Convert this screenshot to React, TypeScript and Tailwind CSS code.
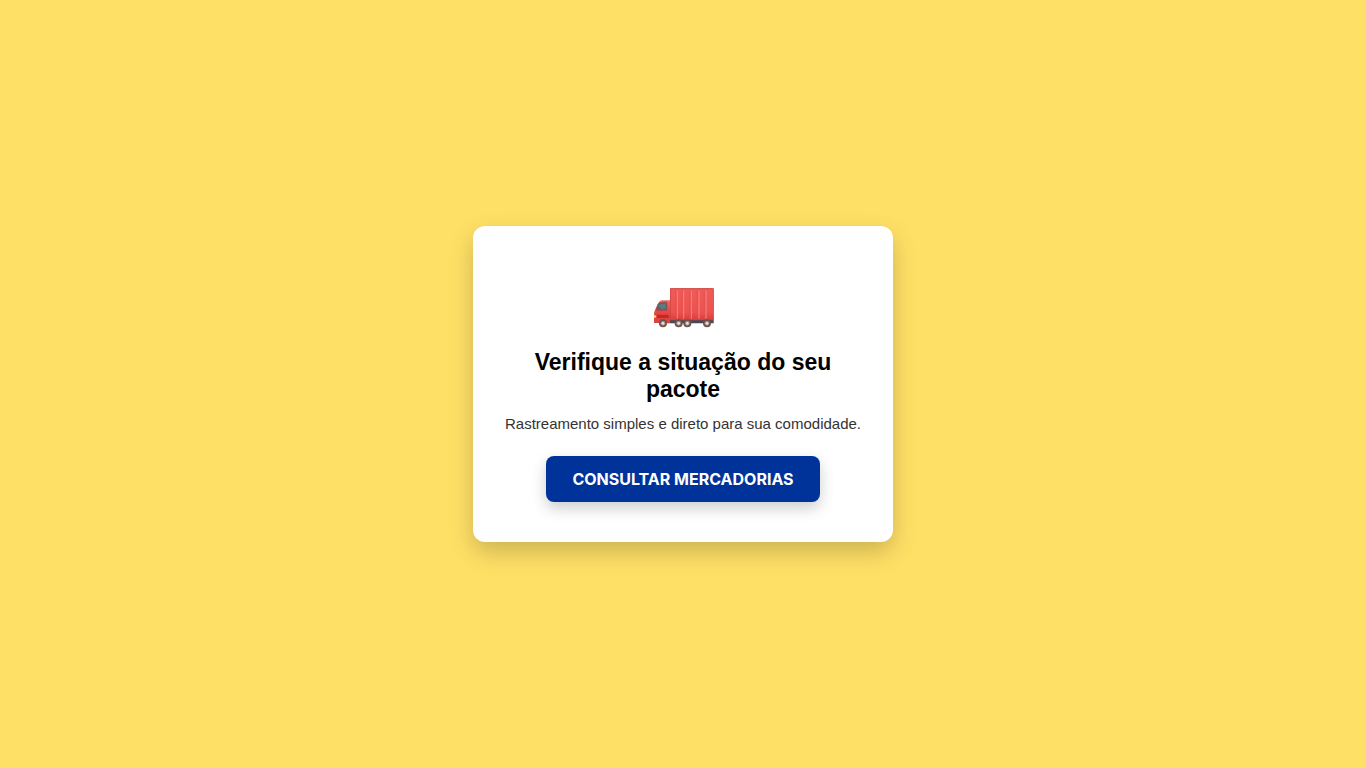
function TruckIcon() {
  return (
    <svg viewBox="0 0 192 126" className="h-[42px] w-16" aria-hidden="true">
      <defs>
        <linearGradient id="trailer" x1="0" y1="0" x2="0" y2="1">
          <stop offset="0" stopColor="#ef5b58" />
          <stop offset="0.75" stopColor="#ec5350" />
          <stop offset="1" stopColor="#d63c3a" />
        </linearGradient>
        <linearGradient id="cab" x1="0" y1="0" x2="0" y2="1">
          <stop offset="0" stopColor="#f46863" />
          <stop offset="0.5" stopColor="#e74745" />
          <stop offset="1" stopColor="#dc3f3d" />
        </linearGradient>
      </defs>
      <path d="M38 101H188V112H38Z" fill="#424b54" />
      <path d="M57 9Q57 6 60 6H185Q188 6 188 9V103H57Z" fill="url(#trailer)" />
      <path d="M57 10V9Q57 6 60 6H185Q188 6 188 9V10Z" fill="#d65451" />
      <path d="M186 9H188V103H186Z M57 10H59V103H57Z" fill="#c94442" />
      <path d="M79 14V98M98 14V98M121 14V98M144 14V98M165 14V98" stroke="#f48582" strokeWidth="3" />
      <path d="M74 14V98M93 14V98M116 14V98M139 14V98M160 14V98" stroke="#e04f4d" strokeWidth="2" />
      <path d="M57 43H33Q27 43 24 48L13 70Q9 77 9 86V111H57Z" fill="url(#cab)" />
      <path d="M21 54Q23 51 27 50L44 48Q48 48 48 52V70Q48 73 45 73H18Q15 73 16 69Z" fill="#53666f" stroke="#b84643" strokeWidth="2" />
      <path d="M22 57L44 52V67L31 70Z" fill="#607983" />
      <path d="M12 86H53V96H10Z" fill="#c62828" />
      <path d="M9 88H16V95H9Z" fill="#ffee58" />
      <path d="M9 101H57V111H9Z" fill="#dc4442" />
      {[36, 83, 109, 168].map((x) => (
        <g key={x}>
          <circle cx={x} cy="112" r="12" fill="#6d514a" />
          <circle cx={x} cy="112" r="7" fill="#a5938d" />
          <circle cx={x} cy="112" r="4" fill="#e4e2e1" />
        </g>
      ))}
    </svg>
  );
}

export default function App() {
  return (
    <main className="flex min-h-screen items-center justify-center bg-[#ffe066] p-5 font-['Liberation_Sans',Arial,sans-serif]">
      <section className="w-full max-w-[420px] rounded-xl bg-white px-[30px] py-10 text-center shadow-[0_10px_25px_rgba(0,0,0,0.2)]">
        <div className="flex justify-center pt-5 pb-[21px]">
          <TruckIcon />
        </div>
        <h1 className="mb-3 text-[23px] leading-[27px] font-bold text-black">Verifique a situação do seu pacote</h1>
        <p className="mb-6 text-[15px] leading-[17px] text-[#333]">Rastreamento simples e direto para sua comodidade.</p>
        <button type="button" className="rounded-lg bg-[#003399] px-[26px] py-[13px] font-['Inter',sans-serif] text-base leading-5 font-bold text-white uppercase shadow-[0_6px_15px_rgba(0,0,0,0.2)]">
          Consultar mercadorias
        </button>
      </section>
    </main>
  );
}
